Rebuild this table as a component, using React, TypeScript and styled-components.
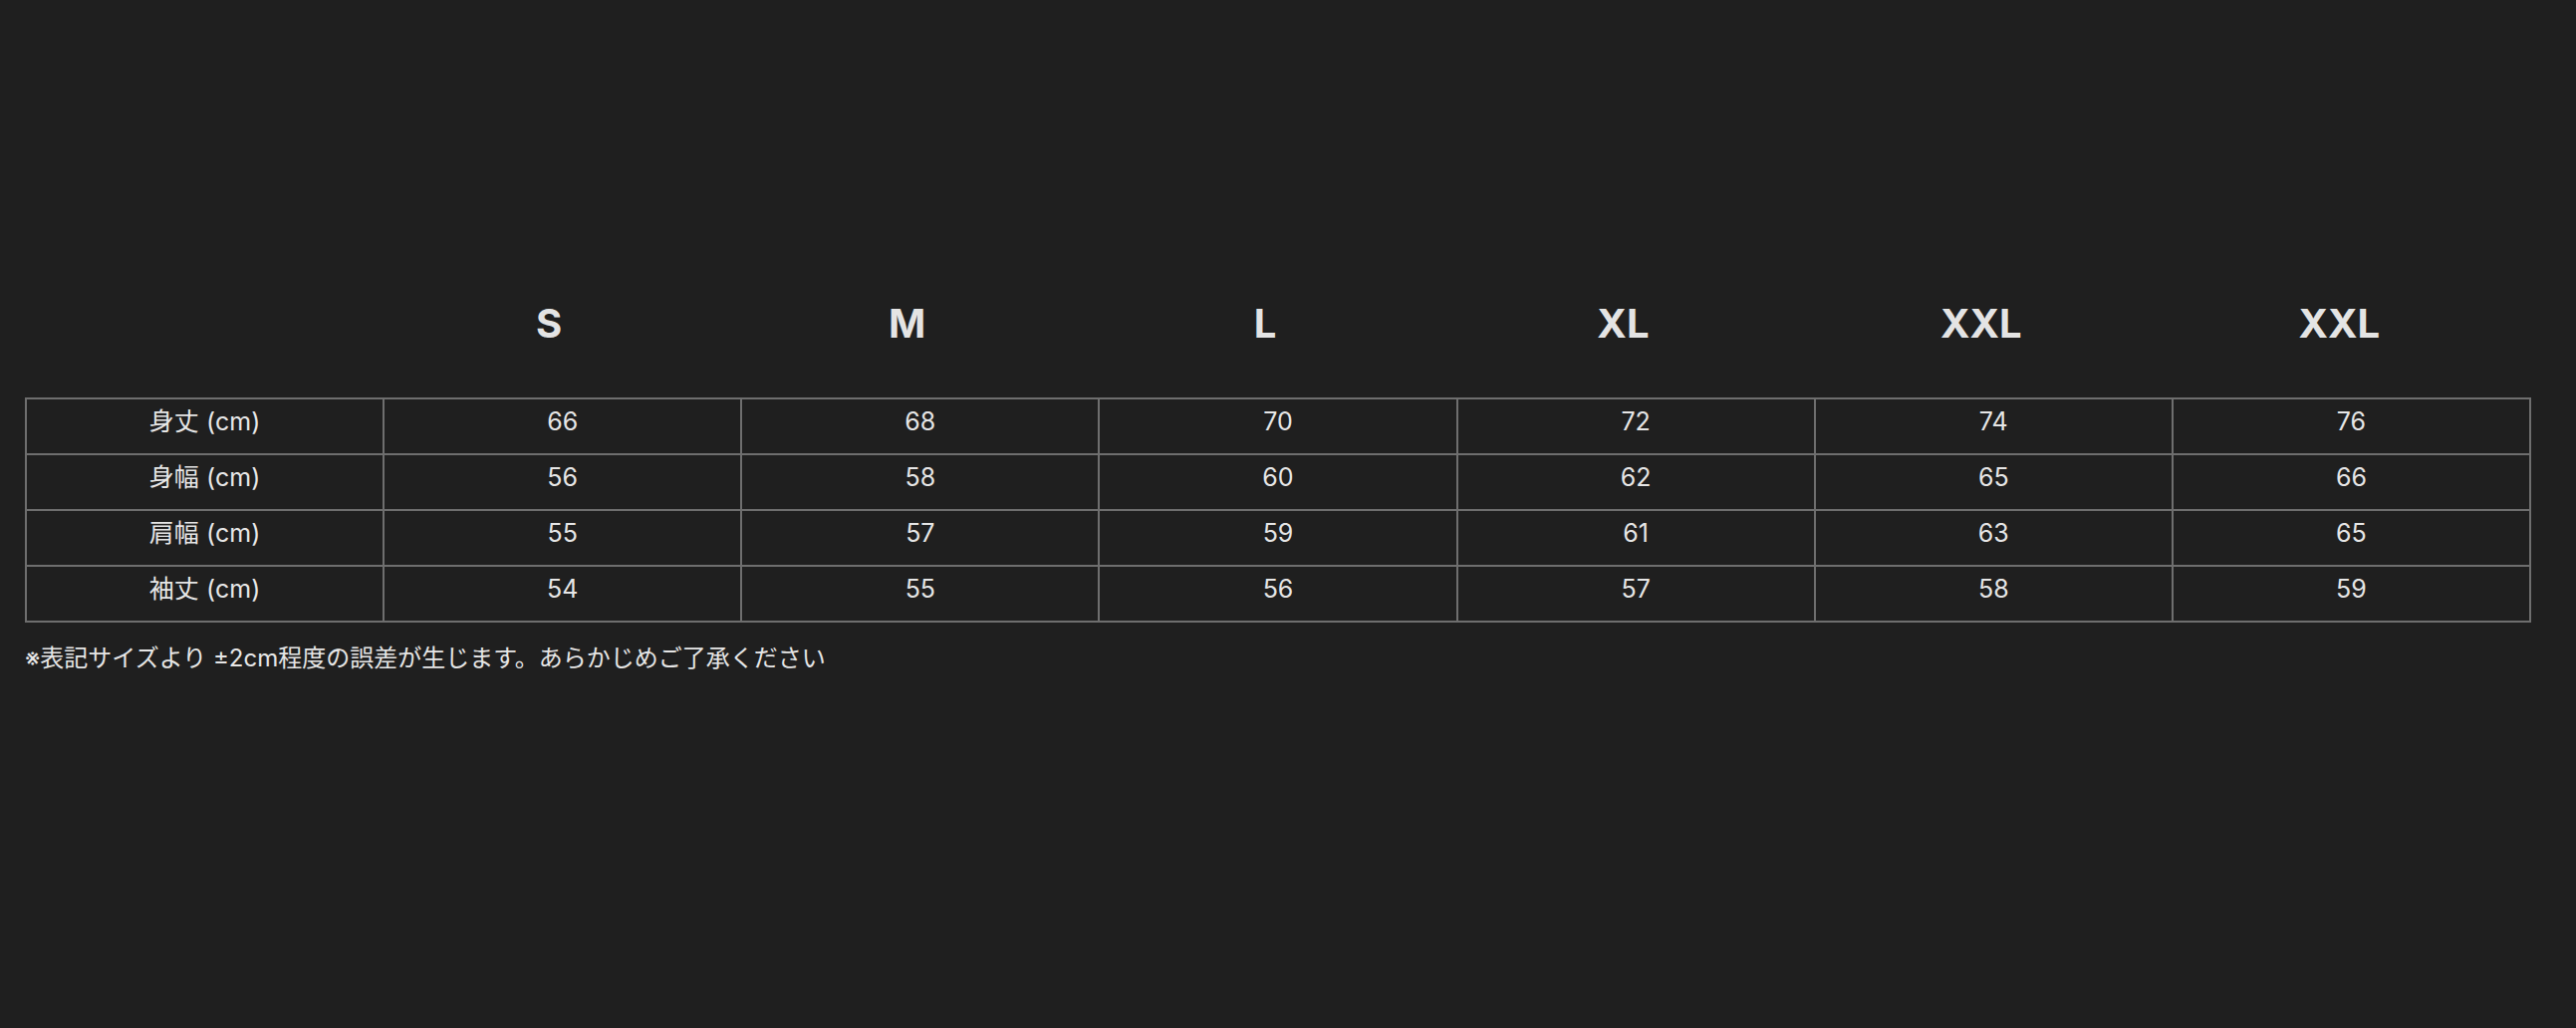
import React from 'react';
import styled, { createGlobalStyle } from 'styled-components';

const GlobalStyle = createGlobalStyle`
  html, body {
    margin: 0;
    padding: 0;
    background: #1f1f1f;
  }
  body {
    font-family: Inter, "Noto Sans CJK JP", sans-serif;
    color: #e6e6e6;
  }
`;

const Page = styled.div`
  min-height: 1032px;
  padding: 300px 46px 0 25px;
  box-sizing: border-box;
`;

const HeaderRow = styled.div`
  display: grid;
  grid-template-columns: repeat(7, 1fr);
  width: 2516px;
  margin-bottom: 49px;
`;

const SizeLabel = styled.div`
  font-size: 40px;
  font-weight: 700;
  line-height: 50px;
  text-align: center;
  padding-right: 26px;
  color: #e4e4e4;
`;

const SizeTable = styled.table`
  width: 2516px;
  table-layout: fixed;
  border-collapse: collapse;
  border: 2px solid #6e6e6e;
`;

const Row = styled.tr`
  height: 56px;
`;

const Cell = styled.td`
  height: 44px;
  padding: 0 0 10px;
  border: 2px solid #6e6e6e;
  text-align: center;
  vertical-align: middle;
  font-size: 25px;
  line-height: 30px;
  color: #e6e6e6;
`;

const Note = styled.p`
  margin: 18px 0 0;
  font-size: 24px;
  line-height: 36px;
  color: #e6e6e6;
`;

const sizes = ['S', 'M', 'L', 'XL', 'XXL', 'XXL'];

const rows: [string, number[]][] = [
  ['身丈 (cm)', [66, 68, 70, 72, 74, 76]],
  ['身幅 (cm)', [56, 58, 60, 62, 65, 66]],
  ['肩幅 (cm)', [55, 57, 59, 61, 63, 65]],
  ['袖丈 (cm)', [54, 55, 56, 57, 58, 59]],
];

function App() {
  return (
    <>
      <GlobalStyle />
      <Page>
        <HeaderRow>
          <SizeLabel />
          {sizes.map((s, i) => (
            <SizeLabel key={i}>{s}</SizeLabel>
          ))}
        </HeaderRow>

        <SizeTable>
          <tbody>
            {rows.map(([label, values]) => (
              <Row key={label}>
                <Cell>{label}</Cell>
                {values.map((v, i) => (
                  <Cell key={i}>{v}</Cell>
                ))}
              </Row>
            ))}
          </tbody>
        </SizeTable>

        <Note>※表記サイズより ±2cm程度の誤差が生じます。あらかじめご了承ください</Note>
      </Page>
    </>
  );
}

export default App;
